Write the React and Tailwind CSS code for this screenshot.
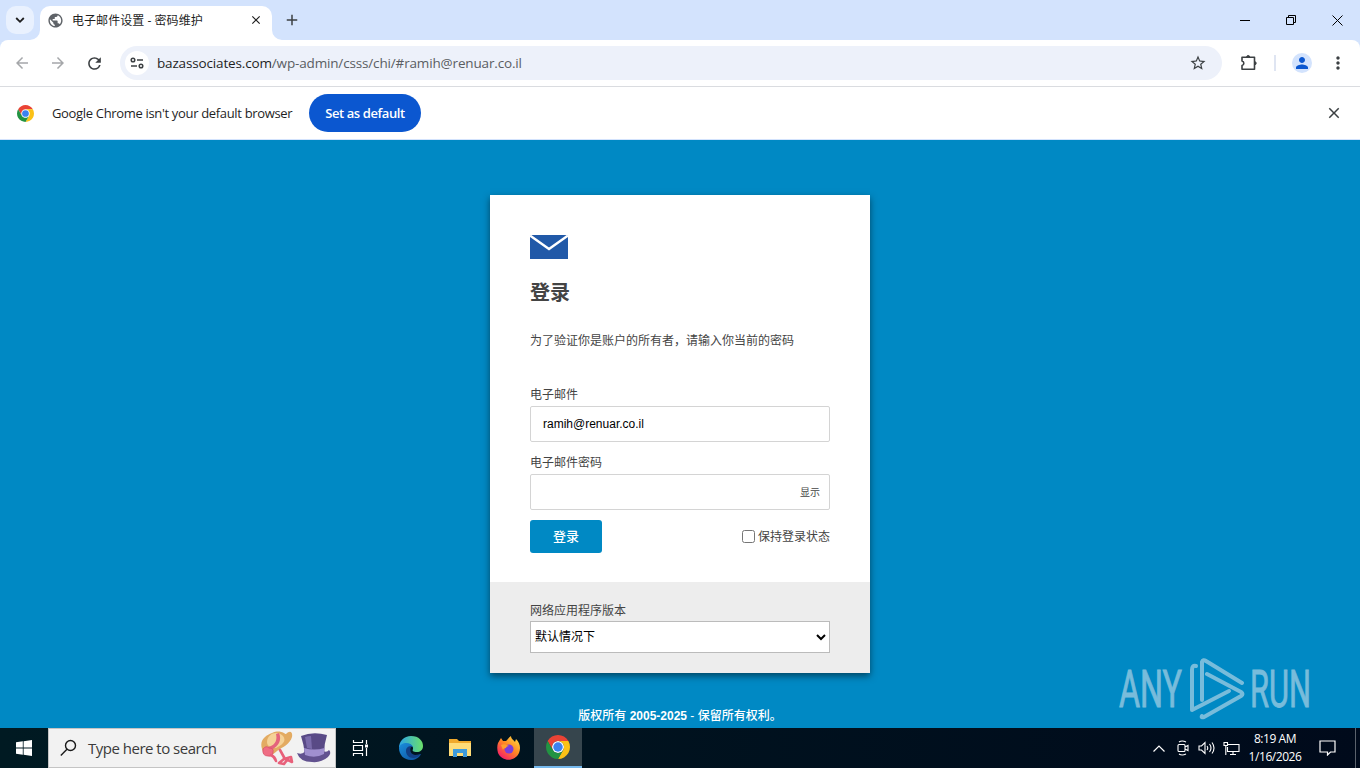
import { useState } from 'react';
import { MdPublic, MdStarBorder, MdPerson, MdMoreVert, MdArrowBack, MdArrowForward, MdRefresh, MdClose, MdAdd } from 'react-icons/md';

function ChromeLogo({ size }) {
  return (
    <svg width={size} height={size} viewBox="0 0 48 48" className="shrink-0">
      <circle cx="24" cy="24" r="12" fill="#fff" />
      <path fill="#ea4335" d="M24 12h20.78a24 24 0 0 0-41.56 0L13.61 30A12 12 0 0 1 24 12Z" />
      <path fill="#fbc116" d="M34.39 30 24 48a24 24 0 0 0 20.78-36H24a12 12 0 0 1 10.39 18Z" />
      <path fill="#229342" d="M13.61 30 3.22 12A24 24 0 0 0 24 48l10.39-18a12 12 0 0 1-20.78 0Z" />
      <circle cx="24" cy="24" r="9.5" fill="#3b82f0" />
    </svg>
  )
}

function TabStrip() {
  return (
    <div className="h-10 flex bg-[#d3e3fd]">
      <div className="w-[40px] pl-[6px] pt-[6px] relative">
        <button className="w-7 h-7 rounded-[10px] bg-[#e9f1fe] flex items-center justify-center">
          <svg width="10" height="10" viewBox="0 0 10 10" fill="none" stroke="#1f1f1f" strokeWidth="1.8">
            <path d="M1.2 3l3.8 3.8L8.8 3" />
          </svg>
        </button>
        <svg className="absolute right-0 bottom-0" width="10" height="10"><path d="M10 0A10 10 0 0 1 0 10H10Z" fill="#fff" /></svg>
      </div>
      <div className="mt-[6px] w-[232px] h-[34px] rounded-t-[10px] bg-white flex items-center pl-2 pr-[9px] pb-[6px]">
        <MdPublic size={17} className="-ml-[1px] text-[#5f6368]" />
        <span className="ml-2 pt-[2px] text-[12px] text-[#1f1f1f] tracking-[0.05px] whitespace-nowrap">电子邮件设置 - 密码维护</span>
        <MdClose size={14} className="ml-auto text-[#1f1f1f]" />
      </div>
      <div className="relative flex items-center">
        <svg className="absolute left-0 bottom-0" width="10" height="10"><path d="M0 0A10 10 0 0 0 10 10H0Z" fill="#fff" /></svg>
        <MdAdd size={18} className="ml-[11px] text-[#3c4043]" />
      </div>
      <div className="ml-auto flex">
        <button className="w-[46px] h-10 flex items-center justify-center">
          <svg width="10" height="10"><path d="M0 5.5H10" stroke="#000" /></svg>
        </button>
        <button className="w-[46px] h-10 flex items-center justify-center">
          <svg width="10" height="10" fill="none" stroke="#000"><path d="M.5 2.5h7v7h-7zM2.5 2.5v-2h7v7h-2" /></svg>
        </button>
        <button className="w-[46px] h-10 flex items-center justify-center">
          <svg width="11" height="11" fill="none" stroke="#000"><path d="M.5.5l10 10M10.5.5l-10 10" /></svg>
        </button>
      </div>
    </div>
  )
}

function Toolbar() {
  return (
    <div className="bg-[#d3e3fd]">
      <div className="h-[47px] bg-white rounded-t-[8px] border-b border-[#dadce0] flex items-center">
        <MdArrowBack size={18} className="ml-[13px] text-[#a5a7aa]" />
        <MdArrowForward size={18} className="ml-[18px] text-[#a5a7aa]" />
        <MdRefresh size={19} className="ml-[18px] text-[#3c4043]" />
        <div className="ml-4 w-[1102px] h-[34px] rounded-full bg-[#edf1fa] flex items-center pl-[5px] pr-[15px]">
          <div className="w-6 h-6 rounded-full bg-white flex items-center justify-center">
            <svg width="14" height="12" viewBox="0 0 14 12" fill="none" stroke="#3c4043" strokeWidth="1.5">
              <circle cx="3" cy="3" r="1.8" /><path d="M7 3h6M1 9h6" /><circle cx="11" cy="9" r="1.8" />
            </svg>
          </div>
          <p className="ml-2 text-[13.5px] tracking-[-0.155px] text-[#5a5d62] whitespace-nowrap"><span className="text-[#1f1f1f]">bazassociates.com</span>/wp-admin/csss/chi/#ramih@renuar.co.il</p>
          <MdStarBorder size={18} className="ml-auto text-[#3c4043]" />
        </div>
        <svg className="ml-[18px]" width="18" height="18" viewBox="0 0 18 18" fill="none" stroke="#3c4043" strokeWidth="1.6" strokeLinejoin="round">
          <path d="M2 3.300h12.500v12H2v-3.800a2.300 2.300 0 0 0 0-4.500z" />
          <path d="M6.700 3a1.500 1.500 0 0 1 3 0zM14.700 7.700a1.500 1.500 0 0 1 0 3z" fill="#3c4043" strokeWidth="1" />
        </svg>
        <div className="ml-[16px] w-[2px] h-4 bg-[#dfe5f2]"></div>
        <div className="ml-4 w-5 h-5 rounded-full bg-[#d3e3fd] flex items-center justify-center">
          <MdPerson size={18} className="text-[#0b57d0]" />
        </div>
        <MdMoreVert size={20} className="ml-4 text-[#3c4043]" />
      </div>
    </div>
  )
}

function InfoBar() {
  return (
    <div className="h-[53px] bg-white flex items-center pl-[17px] pr-[17px] border-b border-[#d3e3fd]">
      <ChromeLogo size={17} />
      <span className="ml-[18px] w-[257px] pt-[2px] text-[13px] tracking-[-0.33px] text-[#1f1f1f] whitespace-nowrap">Google Chrome isn't your default browser</span>
      <button className="w-[112px] h-[38px] pt-[1px] rounded-full bg-[#0b57d0] text-white text-[13px] tracking-[-0.4px] font-semibold whitespace-nowrap">Set as default</button>
      <MdClose size={18} className="ml-auto text-[#3c4043]" />
    </div>
  )
}

function LoginCard() {
  const [user, setUser] = useState({ email: "ramih@renuar.co.il", password: "", keep: false })
  const [show, setShow] = useState(false)

  return (
    <form onSubmit={(e) => e.preventDefault()} className="mt-[55px] w-[380px] h-[478px] bg-white shadow-[0_3px_7px_rgba(0,0,0,0.5)] text-[12px] text-[#444] flex flex-col">
      <div className="h-[387px] px-10 pt-10">
        <svg width="38" height="24" viewBox="0 0 38 24">
          <path d="M0 0h38v24H0z" fill="#2159a8" />
          <path d="M0 .5L19 14 38 .5" fill="none" stroke="#fff" strokeWidth="2.4" />
        </svg>
        <h1 className="mt-[19px] h-[30px] leading-[30px] text-[20px] font-bold">登录</h1>
        <p className="mt-[24px] h-[18px] leading-[18px] whitespace-nowrap">为了验证你是账户的所有者，请输入你当前的密码</p>
        <label htmlFor="email" className="mt-[36px] block h-[20px] leading-[18px]">电子邮件</label>
        <input id="email" value={user.email} onChange={(e) => setUser({ ...user, email: e.target.value })} className="block w-[300px] h-9 border border-[#d4d4d4] rounded-[2px] px-3 text-black outline-none" />
        <label htmlFor="password" className="mt-[11px] block h-[21px] leading-[20px]">电子邮件密码</label>
        <div className="w-[300px] h-9 border border-[#d4d4d4] rounded-[2px] pl-3 pr-[9px] flex items-center">
          <input id="password" type={show ? "text" : "password"} value={user.password} onChange={(e) => setUser({ ...user, password: e.target.value })} className="flex-1 outline-none" />
          <span onClick={() => setShow(!show)} className="text-[10px] cursor-pointer">显示</span>
        </div>
        <div className="mt-[10px] flex items-center justify-between">
          <button type="submit" className="w-[72px] h-[33px] rounded-[3px] bg-[#0089c4] text-white text-[13px] font-medium">登录</button>
          <label className="flex items-center">
            <input type="checkbox" checked={user.keep} onChange={(e) => setUser({ ...user, keep: e.target.checked })} className="w-[13px] h-[13px] mr-[3px]" />
            保持登录状态
          </label>
        </div>
      </div>
      <div className="flex-1 bg-[#ededed] px-10 pt-[20px]">
        <p className="h-[19px] leading-[18px]">网络应用程序版本</p>
        <select className="block w-[300px] h-8 pr-[1px] bg-white border border-[#bbb] text-black">
          <option>默认情况下</option>
        </select>
      </div>
    </form>
  )
}

function Watermark() {
  return (
    <svg className="absolute left-[1100px] top-[505px] opacity-60" width="260" height="83" viewBox="0 0 260 83" fill="none" stroke="#c9dfeb">
      <g fill="#c9dfeb" strokeWidth="0.9" fontFamily="Roboto" fontSize="52">
        <text x="19" y="62" textLength="63" lengthAdjust="spacingAndGlyphs">ANY</text>
        <text x="150" y="62" textLength="61" lengthAdjust="spacingAndGlyphs">RUN</text>
      </g>
      <g strokeWidth="4" strokeLinecap="round" strokeLinejoin="round">
        <path d="M96 21q-4-1-4 4v40l37-19" />
        <path d="M102 55V17q1-3 4-1l36 22M107 29l34 18q3 2 0 4l-37 21q-3 1-2-1" />
      </g>
    </svg>
  )
}

function Hats() {
  return (
    <svg width="72" height="36" viewBox="0 0 72 36">
      <path d="M2 19C-1 10 6 5 12 3c8-4 13 1 14 1 4-4 7-2 6 3-2 7-9 10-15 14-5 5-12 8-15-2z" fill="#e3ab62" />
      <path d="M7 12C7 3 18 0 23 6c4 5-1 9-7 12-5 0-9-2-9-6z" fill="#f5d297" />
      <path d="M8 17C17 15 17 8 16 4l3-1c3 7 0 13-8 17z" fill="#e4637c" />
      <path d="M3 19q3-4 6-1 5 0 4 4 0 5-5 4-6 0-5-7z" fill="#ef6d84" stroke="#d9506a" strokeWidth="0.8" />
      <path d="M11 25q4 2 5 6M20 20l5 9M24 28l8 4-1-5-7 2-5 4 5 1 3-4" fill="none" stroke="#e8607a" strokeWidth="2.600" strokeLinejoin="round" strokeLinecap="round" />
      <path d="M37 23q6 2 8-2h18q4 2 6-1 3 3-1 7-7 6-16 5-12 0-15-9z" fill="#62528f" />
      <path d="M41 6q12-5 26-1-3 9-3 19-9 5-19 1-1-10-4-19z" fill="#594a86" />
      <path d="M44 18q10 3 20.500 0l-.5 6q-9 5-19 1z" fill="#a090cf" />
      <path d="M45 7q3-1 6-1l1 13-5-1z" fill="#7a6bab" />
    </svg>
  )
}

function EdgeIcon() {
  return (
    <svg width="24" height="24" viewBox="0 0 24 24">
      <defs>
        <linearGradient id="edgeTop" x1="0" x2="1"><stop stopColor="#2ba4e8" /><stop offset="1" stopColor="#6be06a" /></linearGradient>
        <linearGradient id="edgeLow" x1="0" x2="1" y2="1"><stop stopColor="#1b8fdc" /><stop offset="1" stopColor="#0c4d9c" /></linearGradient>
      </defs>
      <path d="M0 12C0 5 5 0 12 0c8 0 12 5 12 10 0 4-3 6-6 6-4 0-5-1-4-3 1-5-9-8-14-1z" fill="url(#edgeTop)" />
      <path d="M0 12C1 6 12 5 14 11c-4-2-7 5-1 8 3 1 7 0 9-1-2 4-6 6-10 6-7 0-12-5-12-12z" fill="url(#edgeLow)" />
      <path d="M7 15c0-4 3-5 6-5-3 3-2 8 3 9 3 0 5-1 6-1-6 7-15 4-15-3z" fill="#123f85" />
    </svg>
  )
}

function FolderIcon() {
  return (
    <svg width="22" height="20" viewBox="0 0 22 20">
      <path d="M0 1h8l2 2h12v15H0z" fill="#f0a92c" />
      <path d="M0 5h22v13H0z" fill="#ffdc78" />
      <path d="M4 11h14v8h-4v-4H8v4H4z" fill="#3e9bdc" />
    </svg>
  )
}

function FirefoxIcon() {
  return (
    <svg width="24" height="24" viewBox="0 0 24 24">
      <defs><linearGradient id="fox" x1="1" x2="0.2" y2="1"><stop stopColor="#ffe94a" /><stop offset="0.5" stopColor="#ff8a23" /><stop offset="1" stopColor="#f5156c" /></linearGradient></defs>
      <path d="M1 7l3-5 2 3 3 0c2-2 3-4 5-5 0 3 3 4 4 6l1-3c4 4 5 9 3 14-4 9-17 9-21 0-1-4-1-7 0-10z" fill="url(#fox)" />
      <circle cx="12" cy="13" r="4.500" fill="#7b3ddb" />
      <path d="M4 9c3-2 6 0 8 1-2 0-3 1-3 2-2 0-3 1-3 2z" fill="#ff9f2c" />
    </svg>
  )
}

function Taskbar() {
  return (
    <div className="h-10 flex items-center bg-gradient-to-r from-[#001a22] to-[#000a1b] text-white">
      <div className="w-12 flex justify-center">
        <svg width="16" height="16" viewBox="0 0 16 16" fill="#fff"><path d="M0 2.3l6.8-1v6.3H0zM7.6 1.2L16 0v7.6H7.6zM0 8.4h6.8v6.3L0 13.7zM7.6 8.4H16V16l-8.4-1.2z" /></svg>
      </div>
      <div className="w-[288px] h-10 bg-[#f2f2f2] border border-[#c4c4c4] flex items-center pl-[11px]">
        <svg width="18" height="18" viewBox="0 0 18 18" fill="none" stroke="#1a1a1a" strokeWidth="1.4"><circle cx="10.5" cy="6.5" r="5" /><path d="M7 10.2L.8 16.4" /></svg>
        <span className="ml-[10px] w-[172px] text-[15px] tracking-[-0.5px] text-[#3b3b3b] whitespace-nowrap">Type here to search</span>
        <Hats />
      </div>
      <div className="w-[50px] flex justify-center">
        <svg width="18" height="16" viewBox="0 0 18 16" fill="none" stroke="#fff" strokeWidth="1.2">
          <path d="M1.500 0v2.500h9V0M1.500 5.500h9v5h-9zM1.500 16v-2.500h9V16M14.500 0v4M14.500 8v8" />
          <path d="M13 4.500h3v3h-3z" fill="#fff" stroke="none" />
        </svg>
      </div>
      <div className="w-[50px] flex justify-center"><EdgeIcon /></div>
      <div className="w-[48px] flex justify-center"><FolderIcon /></div>
      <div className="w-[50px] flex justify-center"><FirefoxIcon /></div>
      <div className="w-12 h-10 bg-[#36454d] border-b-2 border-[#76b9ed] flex items-center justify-center"><ChromeLogo size={24} /></div>
      <div className="ml-auto flex items-center">
        <svg width="12" height="7" fill="none" stroke="#fff" strokeWidth="1.2"><path d="M.5 6.500L6 1l5.500 5.500" /></svg>
        <svg className="ml-[12px]" width="12" height="16" fill="none" stroke="#fff" strokeWidth="1.1">
          <path d="M1 5.500q0-1 1-1h5q1 0 1 1v5q0 1-1 1H2q-1 0-1-1zM8 7l3-1.500v5L8 9M2 2q3-2 7 0M2 14q3 2 7 0" />
        </svg>
        <svg className="ml-[9px]" width="18" height="14" fill="none" stroke="#fff" strokeWidth="1.1">
          <path d="M1 5h2.500L7 1.500v11L3.500 9H1zM9 5q1.500 2 0 4M11.500 3q3 4 0 8M14 1.500q4 5.500 0 11" />
        </svg>
        <svg className="ml-[7px]" width="17" height="15" fill="none" stroke="#fff" strokeWidth="1.1">
          <path d="M5 3.500h11v7H4.500V6M1 1.500h3.500v3H1zM2.800 4.500V14M10 10.500v3M7 13.500h6" />
        </svg>
        <div className="ml-[6px] w-[58px] text-center text-[12px] leading-[18px] tracking-[-0.45px] whitespace-nowrap">
          <p>8:19 AM</p>
          <p>1/16/2026</p>
        </div>
        <svg className="ml-[15px] mr-[19px]" width="17" height="16" fill="none" stroke="#fff" strokeWidth="1.2"><path d="M1 1h15v11h-4.500L8.500 15v-3H1z" /></svg>
        <div className="w-[5px] h-10 border-l border-[#5b626c]"></div>
      </div>
    </div>
  )
}

function App() {
  return (
    <div className="w-[1360px] h-[768px] overflow-hidden flex flex-col font-['Open_Sans','Noto_Sans_CJK_SC',sans-serif]">
      <TabStrip />
      <Toolbar />
      <InfoBar />
      <main className="relative flex-1 bg-[#0089c4] flex flex-col items-center font-['Liberation_Sans','Noto_Sans_CJK_SC',sans-serif]">
        <LoginCard />
        <p className="mt-[34px] text-[12px] leading-[18px] font-medium text-white whitespace-nowrap">版权所有 <span className="font-bold">2005-2025</span> - 保留所有权利。</p>
        <Watermark />
      </main>
      <Taskbar />
    </div>
  )
}

export default App;
